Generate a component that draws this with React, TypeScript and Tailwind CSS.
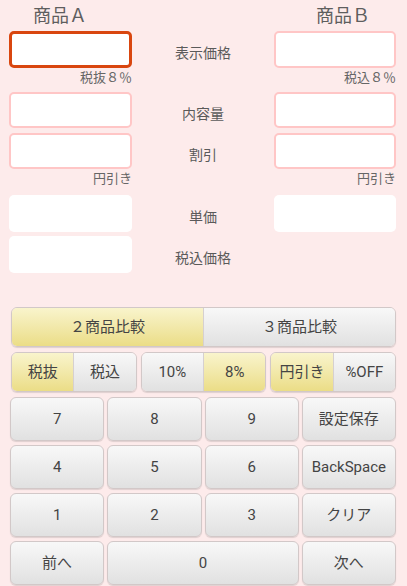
import React from 'react';

const font = "font-['Roboto','Noto_Sans_CJK_JP',sans-serif]";

type Kind = 'active' | 'pink' | 'plain' | 'none';

function Box({ kind, h }: { kind: Kind; h: string }) {
  if (kind === 'none') return <div />;
  const cls =
    kind === 'active'
      ? 'border-[3px] border-[#d9460f]'
      : kind === 'pink'
      ? 'border-2 border-[#ffc6c6]'
      : '';
  return <div className={`${h} rounded-[5px] bg-white ${cls}`} />;
}

function Row({ label, left, right, h = 'h-[37px]' }: { label: string; left: Kind; right: Kind; h?: string }) {
  return (
    <div className="grid grid-cols-[123px_1fr_122px] items-center">
      <Box kind={left} h={h} />
      <div className="flex justify-center pt-[8px] text-[14px] text-[#5a5a5a]">{label}</div>
      <Box kind={right} h={h} />
    </div>
  );
}

function Note({ left, right }: { left: string; right: string }) {
  return (
    <div className="grid grid-cols-[123px_1fr_122px] h-[20px] text-[13px] leading-[20px] text-[#666]">
      <div className="text-right">{left}</div>
      <div />
      <div className="text-right">{right}</div>
    </div>
  );
}

const gray = 'bg-linear-to-b from-[#f8f8f8] to-[#e1e1e1]';
const yellow = 'bg-linear-to-b from-[#f9f4cc] to-[#ebdd86]';

function Seg({ items }: { items: { t: string; on: boolean }[] }) {
  return (
    <div className="flex h-[40px] rounded-[6px] border border-[#d2c8c8] overflow-hidden shadow-[0_1px_1px_rgba(0,0,0,0.12)]">
      {items.map((it, i) => (
        <div
          key={i}
          className={`flex-1 flex items-center justify-center text-[15px] text-[#444] ${it.on ? yellow : gray} ${i > 0 ? 'border-l border-[#d6d0d0]' : ''}`}
        >
          {it.t}
        </div>
      ))}
    </div>
  );
}

function Key({ t, span }: { t: string; span?: boolean }) {
  return (
    <div
      className={`h-[44px] flex items-center justify-center rounded-[6px] border border-[#d2c8c8] text-[15px] text-[#444] shadow-[0_1px_1px_rgba(0,0,0,0.12)] ${gray} ${span ? 'col-span-2' : ''}`}
    >
      {t}
    </div>
  );
}

export default function App() {
  return (
    <div className={`w-[407px] h-[586px] overflow-hidden bg-[#fdebeb] ${font}`}>
      {/* inputs */}
      <div className="pl-[9px] pr-[11px]">
        <div className="flex justify-between h-[31px] pt-[2px] text-[18px] text-[#5e5e5e]">
          <span className="pl-[24px]">商品Ａ</span>
          <span className="pr-[26px]">商品Ｂ</span>
        </div>
        <Row label="表示価格" left="active" right="pink" />
        <Note left="税抜８％" right="税込８％" />
        <div className="h-[4px]" />
        <Row label="内容量" left="pink" right="pink" h="h-[36px]" />
        <div className="h-[5px]" />
        <Row label="割引" left="pink" right="pink" h="h-[36px]" />
        <Note left="円引き" right="円引き" />
        <div className="h-[6px]" />
        <Row label="単価" left="plain" right="plain" />
        <div className="h-[4px]" />
        <Row label="税込価格" left="plain" right="none" />
      </div>

      {/* controls */}
      <div className="mt-[34px] pl-[11px] pr-[11px] flex flex-col gap-[5px]">
        <Seg items={[{ t: '２商品比較', on: true }, { t: '３商品比較', on: false }]} />
        <div className="grid grid-cols-3 gap-[4px]">
          <Seg items={[{ t: '税抜', on: true }, { t: '税込', on: false }]} />
          <Seg items={[{ t: '10%', on: false }, { t: '8%', on: true }]} />
          <Seg items={[{ t: '円引き', on: true }, { t: '%OFF', on: false }]} />
        </div>
      </div>

      <div className="mt-[5px] pl-[10px] pr-[11px] grid grid-cols-4 gap-x-[3px] gap-y-[4px]">
        <Key t="7" />
        <Key t="8" />
        <Key t="9" />
        <Key t="設定保存" />
        <Key t="4" />
        <Key t="5" />
        <Key t="6" />
        <Key t="BackSpace" />
        <Key t="1" />
        <Key t="2" />
        <Key t="3" />
        <Key t="クリア" />
        <Key t="前へ" />
        <Key t="0" span />
        <Key t="次へ" />
      </div>
    </div>
  );
}
